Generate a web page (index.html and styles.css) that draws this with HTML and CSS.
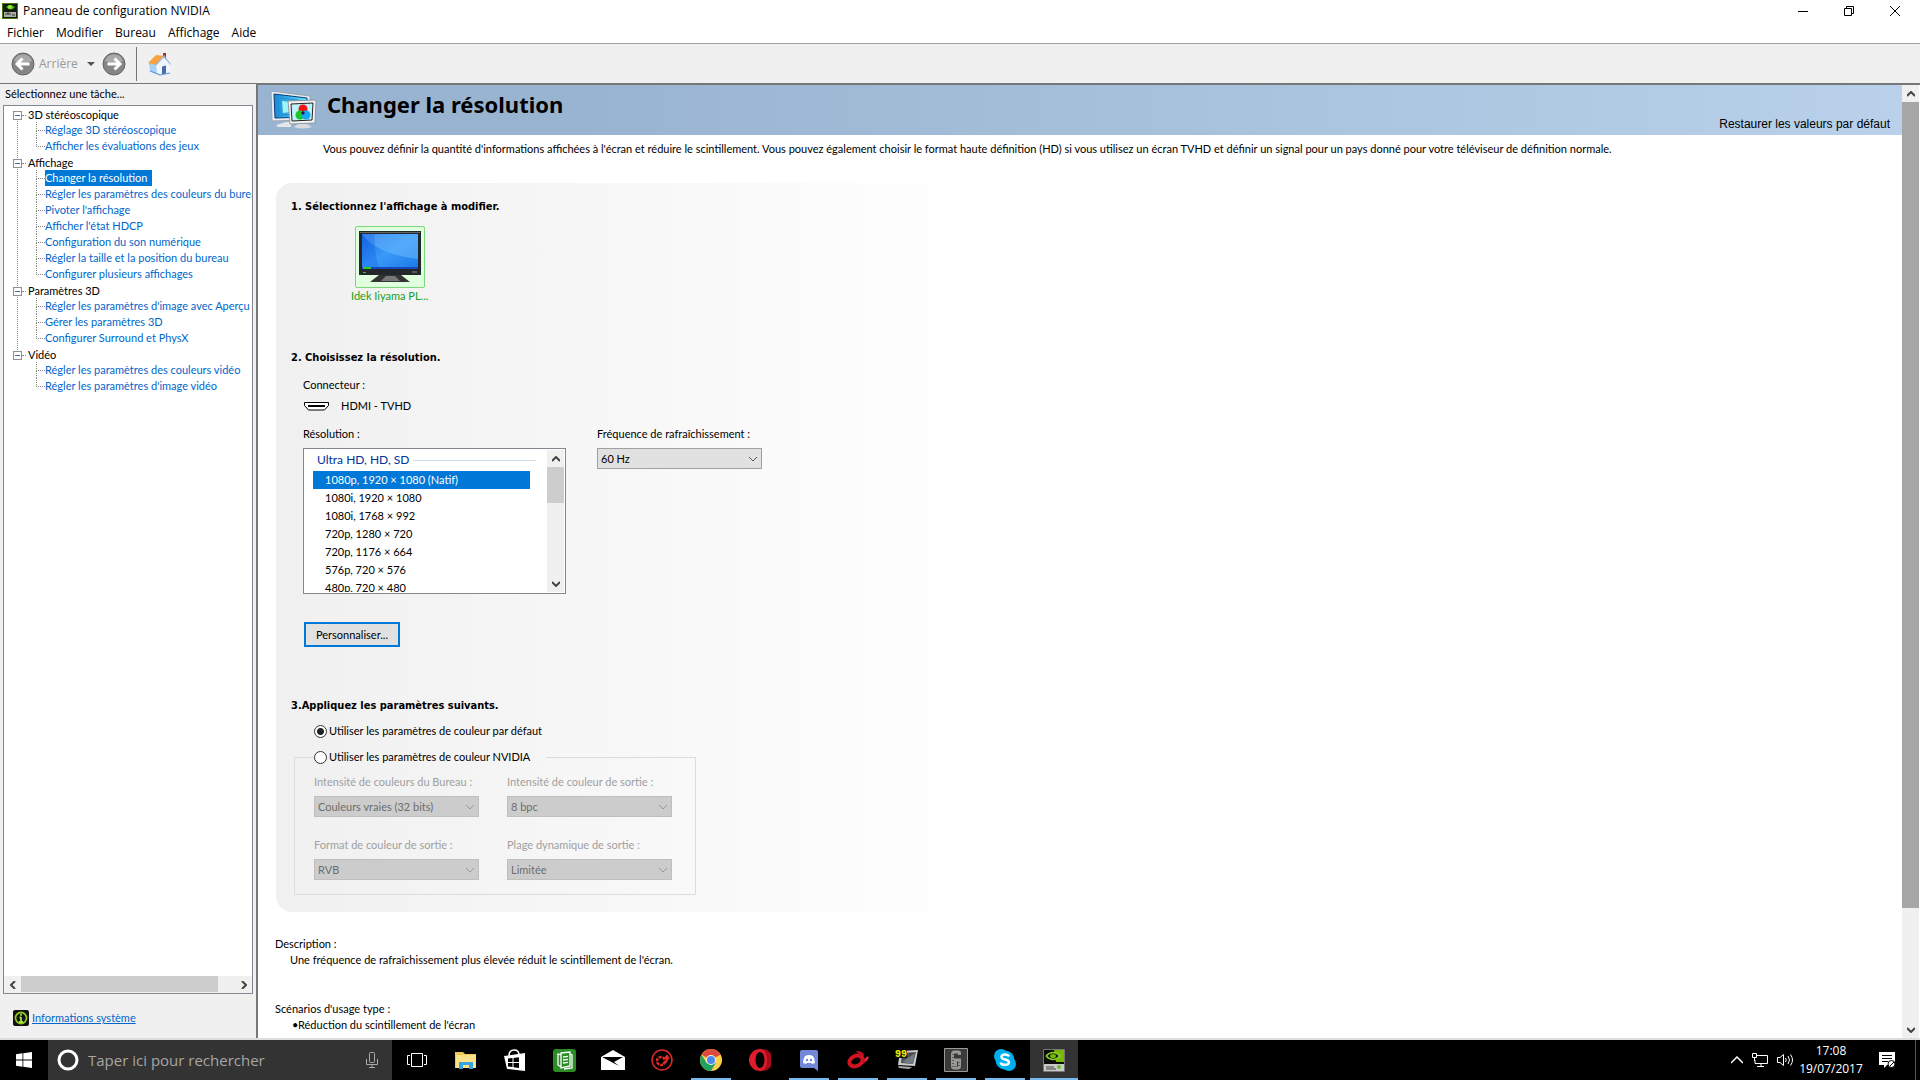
FILE: index.html
```html
<!DOCTYPE html>
<html lang="fr">
	<head>
		<meta charset="UTF-8">
		<title>Panneau de configuration NVIDIA</title>
		<link rel="stylesheet" href="styles.css">
	</head>
	<body>
		<!-- barre de titre -->
		<header class="titlebar">
			<svg class="app-icon" width="16" height="16" viewBox="0 0 16 16"><rect width="16" height="16" fill="#4c7a10"/><rect x="1" y="1" width="14" height="14" fill="#141a0e"/><path d="M4 4q4-4 9 0q-4 5-9 0" fill="#4caf10"/><circle cx="8" cy="4" r="2" fill="#8ff03c"/><rect x="2" y="9" width="12" height="5" fill="#aab0a8"/><path d="M3 11h6M10 12h3M6 9v2" stroke="#333"/></svg>
			<h1 class="win-title">Panneau de configuration NVIDIA</h1>
			<button class="win-btn" aria-label="Réduire"><svg width="10" height="10"><path d="M0 5.5h10" stroke="#000"/></svg></button>
			<button class="win-btn" aria-label="Restaurer"><svg width="10" height="10" fill="none" stroke="#000"><path d="M.5 2.5h7v7h-7zM2.5 2.5v-2h7v7h-2"/></svg></button>
			<button class="win-btn" aria-label="Fermer"><svg width="10" height="10"><path d="M0 0l10 10M10 0L0 10" stroke="#000"/></svg></button>
		</header>
		<nav class="menubar">
			<button>Fichier</button>
			<button>Modifier</button>
			<button>Bureau</button>
			<button>Affichage</button>
			<button>Aide</button>
		</nav>

		<div class="toolbar">
			<button class="nav-btn">
				<svg width="24" height="24" viewBox="0 0 24 24"><circle cx="12" cy="12" r="11" fill="#858585" stroke="#666"/><path d="M3 9a9.500 9.500 0 0 1 18 0q-9 4-18 0" fill="#a9a9a9"/><path d="M18.500 12H6.500M11.500 6.500L6 12l5.500 5.500" fill="none" stroke="#fff" stroke-width="3"/></svg>
				<span>Arrière</span>
			</button>
			<button class="nav-drop" aria-label="Historique"><svg width="8" height="4"><path d="M0 0h8L4 4z" fill="#555"/></svg></button>
			<button class="nav-btn" aria-label="Suivant">
				<svg width="24" height="24" viewBox="0 0 24 24"><circle cx="12" cy="12" r="11" fill="#858585" stroke="#666"/><path d="M3 9a9.500 9.500 0 0 1 18 0q-9 4-18 0" fill="#a9a9a9"/><path d="M5.500 12H17.500M12.500 6.500L18 12l-5.500 5.500" fill="none" stroke="#fff" stroke-width="3"/></svg>
			</button>
			<button class="home-btn" aria-label="Accueil">
				<svg width="24" height="24" viewBox="0 0 24 24"><path d="M16 1h3v7h-3z" fill="#a03028"/><path d="M2 11l8-3 3 15-10-4z" fill="#a8d0f6"/><path d="M9 13l8-8 6 8v8l-10 2-3-2z" fill="#eef5fd"/><path d="M1 11L9 3l8 1-8 9z" fill="#f6a33c"/><path d="M9 13l8-9 6.500 8.500" fill="none" stroke="#9cb8dc" stroke-width="1.200"/><path d="M15 14.500l4-1v8l-4 .8z" fill="#4c68a8"/><path d="M3 19l10 4 10-2" fill="none" stroke="#5a96e0" stroke-width="1.200"/></svg>
			</button>
		</div>

		<div class="main">
			<aside class="sidebar">
				<h2 class="side-title">Sélectionnez une tâche...</h2>
				<div class="tree-box">
					<ul class="tree">
						<li class="group"><button class="toggle" aria-label="Replier"></button><span>3D stéréoscopique</span>
							<ul>
								<li><a href="#">Réglage 3D stéréoscopique</a></li>
								<li><a href="#">Afficher les évaluations des jeux</a></li>
							</ul>
						</li>
						<li class="group"><button class="toggle" aria-label="Replier"></button><span>Affichage</span>
							<ul>
								<li><a href="#" class="current">Changer la résolution</a></li>
								<li><a href="#">Régler les paramètres des couleurs du bureau</a></li>
								<li><a href="#">Pivoter l'affichage</a></li>
								<li><a href="#">Afficher l'état HDCP</a></li>
								<li><a href="#">Configuration du son numérique</a></li>
								<li><a href="#">Régler la taille et la position du bureau</a></li>
								<li><a href="#">Configurer plusieurs affichages</a></li>
							</ul>
						</li>
						<li class="group"><button class="toggle" aria-label="Replier"></button><span>Paramètres 3D</span>
							<ul>
								<li><a href="#">Régler les paramètres d'image avec Aperçu</a></li>
								<li><a href="#">Gérer les paramètres 3D</a></li>
								<li><a href="#">Configurer Surround et PhysX</a></li>
							</ul>
						</li>
						<li class="group"><button class="toggle" aria-label="Replier"></button><span>Vidéo</span>
							<ul>
								<li><a href="#">Régler les paramètres des couleurs vidéo</a></li>
								<li><a href="#">Régler les paramètres d'image vidéo</a></li>
							</ul>
						</li>
					</ul>
					<div class="hscroll">
						<button aria-label="Gauche"><svg width="6" height="8"><path d="M5 0L1 4l4 4" fill="none" stroke="#444" stroke-width="2"/></svg></button>
						<div class="track"><div class="thumb"></div></div>
						<button aria-label="Droite"><svg width="6" height="8"><path d="M1 0l4 4-4 4" fill="none" stroke="#444" stroke-width="2"/></svg></button>
					</div>
				</div>
				<div class="sysinfo">
					<svg width="16" height="16" viewBox="0 0 16 16"><rect width="16" height="16" rx="2" fill="#111"/><circle cx="8" cy="8" r="5.500" fill="none" stroke="#8ccb1c" stroke-width="1.800"/><path d="M8 4v1.800M8 7v5M6.500 7.500H8M6 12h4" stroke="#a8e040" stroke-width="1.800"/></svg>
					<a href="#">Informations système</a>
				</div>
			</aside>

			<main class="content">
				<div class="page">
					<div class="banner">
						<svg class="banner-icon" width="48" height="40" viewBox="0 0 48 40">
							<defs><linearGradient id="scr" x1="0" y1="0" x2="1" y2="0"><stop offset="0" stop-color="#1688d8"/><stop offset="1" stop-color="#5fe6f4"/></linearGradient></defs>
							<path d="M1 1l39 5v24L2 31z" fill="#e8ecf0" stroke="#9aa4ae"/><path d="M4 4l33 4v19L5 28z" fill="url(#scr)" stroke="#0a3c80"/><path d="M8 8l20 2v14L9 25z" fill="none" stroke="#2a8ad0"/><path d="M12 11l8 1v10l-7 1z" fill="#9df4fa"/>
							<path d="M6 35l10-3h5v5H8z" fill="#e4e6e8"/>
							<path d="M18 11l28-1-1 23-25 1z" fill="#f2f3f5" stroke="#9098a0"/><path d="M21 14l22-1-1 17-20 1z" fill="#bff2fa" stroke="#222"/>
							<path d="M28 34h9l5 3q-10 3-18 0z" fill="#d8dadd"/>
							<circle cx="33" cy="19" r="4.500" fill="#f01414"/><circle cx="30" cy="25" r="4.500" fill="#18c828"/><circle cx="36" cy="25" r="4.500" fill="#16a8f0"/><path d="M33 21l2 2-2 2-2-2z" fill="#301050"/>
						</svg>
						<h2 class="banner-title">Changer la résolution</h2>
						<a href="#" class="restore">Restaurer les valeurs par défaut</a>
					</div>
					<p class="intro">Vous pouvez définir la quantité d'informations affichées à l'écran et réduire le scintillement. Vous pouvez également choisir le format haute définition (HD) si vous utilisez un écran TVHD et définir un signal pour un pays donné pour votre téléviseur de définition normale.</p>

					<div class="panel">
						<h3>1. Sélectionnez l'affichage à modifier.</h3>
						<button class="display">
							<span class="display-pic">
								<svg width="62" height="52" viewBox="0 0 62 52">
									<defs>
										<linearGradient id="tv" x1="0" y1="0" x2="1" y2="1"><stop offset="0" stop-color="#1668e4"/><stop offset=".5" stop-color="#3a9af8"/><stop offset="1" stop-color="#1a78e8"/></linearGradient>
									</defs>
									<path d="M0 0h62v44H0z" fill="#23262a"/><path d="M1 1h60v1H1z" fill="#666"/>
									<path d="M3 3h56v35H3z" fill="url(#tv)"/><path d="M3 3q14 20 56 25V3z" fill="#6ab8fc" opacity=".55"/><path d="M16 3q-2 12 4 35H3V3z" fill="#0e58e0" opacity=".3"/>
									<path d="M3 36h56v2H3z" fill="#1848c0"/><path d="M4 36h8v2H4zM4 41h3v1H4z" fill="#2ec82e"/><path d="M53 41h5" stroke="#888"/>
									<path d="M20 44h22l9 7H11z" fill="#333"/><path d="M27 45h9l5 5H22z" fill="#777"/>
								</svg>
							</span>
							<span>Idek Iiyama PL...</span>
						</button>

						<h3 class="step-two">2. Choisissez la résolution.</h3>
						<div class="step-body">
							<p>Connecteur :</p>
							<p class="connector">
								<svg width="25" height="9"><path d="M.5 .5h24v3l-4 4.500h-16l-4-4.500z" fill="#fff" stroke="#000"/><path d="M4 4h17" stroke="#000" stroke-width="2"/></svg>
								HDMI - TVHD
							</p>
							<div class="modes">
								<div class="mode-field">
									<p id="res-label">Résolution :</p>
									<div class="listbox">
										<div class="list-view">
											<p class="list-head">Ultra HD, HD, SD</p>
											<ul role="listbox" aria-labelledby="res-label">
												<li role="option" aria-selected="true">1080p, 1920 × 1080 (Natif)</li>
												<li role="option">1080i, 1920 × 1080</li>
												<li role="option">1080i, 1768 × 992</li>
												<li role="option">720p, 1280 × 720</li>
												<li role="option">720p, 1176 × 664</li>
												<li role="option">576p, 720 × 576</li>
												<li role="option">480p, 720 × 480</li>
											</ul>
										</div>
										<div class="vscroll">
											<button aria-label="Haut"><svg width="8" height="6"><path d="M0 5l4-4 4 4" fill="none" stroke="#444" stroke-width="2"/></svg></button>
											<div class="track"><div class="thumb"></div></div>
											<button aria-label="Bas"><svg width="8" height="6"><path d="M0 1l4 4 4-4" fill="none" stroke="#444" stroke-width="2"/></svg></button>
										</div>
									</div>
								</div>
								<div class="mode-field">
									<label for="freq">Fréquence de rafraîchissement :</label>
									<div class="combo">
										<select id="freq"><option>60 Hz</option></select>
										<svg width="10" height="6"><path d="M1 1l4 4 4-4" fill="none" stroke="#555"/></svg>
									</div>
								</div>
							</div>
							<button class="custom-btn">Personnaliser...</button>
						</div>

						<h3 class="step-three">3.Appliquez les paramètres suivants.</h3>
						<label class="choice first-choice"><input type="radio" name="color" checked>Utiliser les paramètres de couleur par défaut</label>
						<fieldset class="colors">
							<legend><label class="choice"><input type="radio" name="color">Utiliser les paramètres de couleur NVIDIA</label></legend>
							<div class="color-grid">
								<div class="mode-field">
									<label for="depth">Intensité de couleurs du Bureau :</label>
									<div class="combo">
										<select id="depth" disabled><option>Couleurs vraies (32 bits)</option></select>
										<svg width="10" height="6"><path d="M1 1l4 4 4-4" fill="none" stroke="#999"/></svg>
									</div>
								</div>
								<div class="mode-field">
									<label for="out-depth">Intensité de couleur de sortie :</label>
									<div class="combo">
										<select id="out-depth" disabled><option>8 bpc</option></select>
										<svg width="10" height="6"><path d="M1 1l4 4 4-4" fill="none" stroke="#999"/></svg>
									</div>
								</div>
								<div class="mode-field">
									<label for="format">Format de couleur de sortie :</label>
									<div class="combo">
										<select id="format" disabled><option>RVB</option></select>
										<svg width="10" height="6"><path d="M1 1l4 4 4-4" fill="none" stroke="#999"/></svg>
									</div>
								</div>
								<div class="mode-field">
									<label for="range">Plage dynamique de sortie :</label>
									<div class="combo">
										<select id="range" disabled><option>Limitée</option></select>
										<svg width="10" height="6"><path d="M1 1l4 4 4-4" fill="none" stroke="#999"/></svg>
									</div>
								</div>
							</div>
						</fieldset>
					</div>

					<div class="notes">
						<p>Description :</p>
						<p class="note-text">Une fréquence de rafraîchissement plus élevée réduit le scintillement de l'écran.</p>
						<p class="usage">Scénarios d'usage type :</p>
						<ul>
							<li>Réduction du scintillement de l'écran</li>
						</ul>
					</div>
				</div>
				<div class="vscroll page-scroll">
					<button aria-label="Haut"><svg width="8" height="6"><path d="M0 5l4-4 4 4" fill="none" stroke="#444" stroke-width="2"/></svg></button>
					<div class="track"><div class="thumb"></div></div>
					<button aria-label="Bas"><svg width="8" height="6"><path d="M0 1l4 4 4-4" fill="none" stroke="#444" stroke-width="2"/></svg></button>
				</div>
			</main>
		</div>

		<!-- barre des tâches -->
		<footer class="taskbar">
			<button class="task" aria-label="Démarrer"><svg width="16" height="16" viewBox="0 0 16 16" fill="#fff"><path d="M0 2.200L6.500 1.300v6.300H0zM7.300 1.200L16 0v7.600H7.300zM0 8.400h6.500v6.300L0 13.800zM7.300 8.400H16V16l-8.700-1.200z"/></svg></button>
			<label class="search">
				<svg width="22" height="22"><circle cx="11" cy="11" r="9" fill="none" stroke="#fff" stroke-width="3"/></svg>
				<input type="text" placeholder="Taper ici pour rechercher" aria-label="Rechercher">
				<svg width="12" height="16" fill="none" stroke="#aaa"><rect x="3.500" y=".5" width="5" height="10" rx="1"/><path d="M.5 7v5.500h11V7M6 12.500v3M3 15.500h6"/></svg>
			</label>
			<div class="tasks">
				<button class="task" aria-label="Vue des tâches"><svg width="20" height="16" fill="none" stroke="#fff"><path d="M4.500 1.500h11v13h-11zM3 3.500H.5v9H3M17 3.500h2.500v9H17"/></svg></button>
				<button class="task" aria-label="Explorateur"><svg width="22" height="18"><path d="M0 1h8l2 2h11v14H0z" fill="#f0c75a"/><path d="M1 4h20v13H1z" fill="#fce38a"/><path d="M4 18v-7h14v7h-4v-4H8v4z" fill="#36a5e0"/></svg></button>
				<button class="task" aria-label="Store"><svg width="22" height="24"><path d="M5 8q0-6 5-6t5 5" fill="none" stroke="#fff" stroke-width="1.500"/><path d="M0 8l21-3v18l-18-2z" fill="#fff"/><path d="M4 10.500l4.500-.5v4H4zM9.500 10l5.500-.8V14H9.500zM4 15h4.500v4L4 18.500zM9.500 15H15v5l-5.500-.7z" fill="#000"/></svg></button>
				<button class="task" aria-label="Documents"><svg width="23" height="23"><rect width="23" height="23" rx="3" fill="#2c8c28"/><g fill="none" stroke="#fff" stroke-width="1.300"><path d="M8 4l9-1v14l-9 2zM8 6l-3-1v11l3 2M17 5l2 1v13l-8 1"/><path d="M10 8l5-.6M10 11l5-.6M10 14l5-.6"/></g></svg></button>
				<button class="task" aria-label="Courrier"><svg width="24" height="20"><path d="M0 7l12-7 12 7v13H0z" fill="#fff"/><path d="M1 7l21 0-9 5 5 4z" fill="#000"/></svg></button>
				<button class="task" aria-label="Gaming"><svg width="22" height="22" fill="none" stroke="#e02828"><circle cx="11" cy="11" r="10" stroke-width="1.500"/><circle cx="10" cy="12" r="4" stroke-width="2.500" stroke-dasharray="3 1"/><path d="M12 14q5 0 4-6M13.500 10L16 7l2 3" stroke-width="2"/></svg></button>
				<button class="task open" aria-label="Chrome"><svg width="22" height="22" viewBox="-11 -11 22 22"><circle r="11" fill="#fcd04a"/><path d="M0 0L-9.500-5.500A11 11 0 0 1 9.500-5.500z" fill="#dc4a3c"/><path d="M-9.500-5.500A11 11 0 0 0 0 11L5 2.500-4.500 3z" fill="#22a060"/><path d="M0-5.500h9.500" stroke="#dc4a3c"/><circle r="5" fill="#f4f4f4"/><circle r="4" fill="#4a8af0"/></svg></button>
				<button class="task" aria-label="Opera"><svg width="22" height="22"><ellipse cx="11" cy="11" rx="11" ry="11" fill="#e01b2c"/><path d="M13 0a11 11 0 0 1 0 22q5-3 5-11t-5-11" fill="#a80c1a"/><ellipse cx="11" cy="11" rx="4.500" ry="8" fill="#000"/></svg></button>
				<button class="task open" aria-label="Discord"><svg width="18" height="21"><path d="M2 0h14q2 0 2 2v19l-4-3H2q-2 0-2-2V2q0-2 2-2z" fill="#7289da"/><path d="M5 6q4-2 8 0 2 3 2 7l-3 1-1-1H7l-1 1-3-1q0-4 2-7" fill="#fff"/><circle cx="7" cy="10" r="1.200" fill="#7289da"/><circle cx="11" cy="10" r="1.200" fill="#7289da"/></svg></button>
				<button class="task open" aria-label="MSI"><svg width="24" height="20"><ellipse cx="10" cy="11" rx="7" ry="5" fill="none" stroke="#d01424" stroke-width="4" transform="rotate(-25 10 11)"/><path d="M10 1q8 0 8 5l-4 0z" fill="#c01020"/><path d="M17 9l5-3q-1 6-5 8z" fill="#c01020"/><path d="M19 11q2-1 3-4" stroke="#e03040" stroke-width="2"/></svg></button>
				<button class="task open" aria-label="Fraps"><svg width="24" height="22"><path d="M5 2l18-1-3 16-17-1z" fill="#ccc"/><path d="M7 4l14-1-3 12-12-1z" fill="#444b52"/><path d="M7 13L20 4l-2 11z" fill="#727a82"/><path d="M3 17l14 1-3 2-10-1z" fill="#aaa"/><path d="M0 1h12v8H0z" fill="#111"/><text x="0" y="8" class="fps">99</text></svg></button>
				<button class="task open" aria-label="Rainbow Six"><svg width="24" height="24"><path d="M.5 .5h23v23H.5z" fill="#3a3a38" stroke="#999"/><path d="M15.500 7V5q0-1-1-1h-4q-2 0-2 2v12q0 2 2 2h3q2 0 2-2v-6h-4v6" fill="none" stroke="#989894" stroke-width="3"/><path d="M9 6v13M15 14v5" stroke="#222" stroke-dasharray="1 2"/></svg></button>
				<button class="task open" aria-label="Skype"><svg width="22" height="22"><circle cx="7" cy="7" r="7" fill="#00aff0"/><circle cx="15" cy="15" r="7" fill="#00aff0"/><circle cx="11" cy="11" r="9.500" fill="#00aff0"/><path d="M15 7.500q-1-2-4-2t-3.600 2.300q0 2 3.600 2.700t4 2.800q0 2.500-4 2.500t-4.300-2.300" fill="none" stroke="#fff" stroke-width="2.400"/></svg></button>
				<button class="task active" aria-label="NVIDIA"><svg width="22" height="23"><path d="M.5 .5h21v22H.5z" fill="#0c0c0c" stroke="#777"/><path d="M11 1h10v12h-8z" fill="#76b900"/><path d="M3 7q7-7 14 0-7 7-14 0" fill="#0c0c0c" stroke="#8ed420" stroke-width="1.500"/><ellipse cx="10" cy="7" rx="3" ry="2" fill="#76b900"/><path d="M1 15h20v7H1z" fill="#c8ccc4"/><path d="M3 18h8M3 20h10" stroke="#444"/><circle cx="16" cy="18" r="2" fill="#6cbc30"/></svg></button>
			</div>
			<div class="tray">
				<button aria-label="Icônes cachées"><svg width="12" height="8"><path d="M0 7l6-6 6 6" fill="none" stroke="#fff" stroke-width="1.500"/></svg></button>
				<button aria-label="Réseau"><svg width="16" height="14" fill="none" stroke="#fff"><path d="M5 2.500h10.500v8H3V7M9 10.500v3M5 13.500h7M.5 .5h4v4h-4zM2.500 4v4"/></svg></button>
				<button aria-label="Volume"><svg width="17" height="14" fill="none" stroke="#fff"><path d="M.5 4.500H3l3.500-3v11L3 9.500H.5zM8.500 5q1.500 2 0 4M11 3q3 4 0 8M13.500 1.500q4 5.500 0 11"/></svg></button>
			</div>
			<div class="clock"><time>17:08</time><time>19/07/2017</time></div>
			<button class="notif" aria-label="Notifications"><svg width="17" height="17"><path d="M0 0h16v13H8l-3 3v-3H0z" fill="#fff"/><path d="M3 3.500h10M3 6.500h10M3 9.500h6" stroke="#000"/><circle cx="12.500" cy="12" r="3.500" fill="#fff" stroke="#000"/><path d="M11 14l4-4" stroke="#000"/></svg></button>
		</footer>
	</body>
</html>
```
FILE: styles.css
```css
*{ box-sizing: border-box; margin: 0; padding: 0;}
body{ display: flex; flex-direction: column; height: 100vh; overflow: hidden; background: #fff; color: #000; font: 11px/16px Lato, Tahoma, sans-serif;}
ul{ list-style: none;}
button{ border: none; background: none; font: inherit; color: inherit;}
svg{ display: block; flex: none;}

/* barre de titre et menus */
.titlebar{ display: flex; align-items: center; height: 22px; padding: 0 2px; font: 12px/20px "Open Sans", "Segoe UI", sans-serif;}
.win-title{ flex: 1; padding-left: 5px; font-size: 12px; font-weight: normal;}
.win-btn{ display: flex; align-items: center; justify-content: center; width: 46px; height: 20px;}
.menubar{ display: flex; gap: 12px; height: 22px; padding: 0 7px; border-bottom: 1px solid #a0a0a0; font: 12px/20px "Open Sans", "Segoe UI", sans-serif;}
.toolbar{ display: flex; align-items: center; height: 40px; padding: 0 11px; background: #f0f0f0; border-bottom: 1px solid #777;}
.nav-btn{ display: flex; align-items: center; gap: 4px; color: #999; font: 12px/20px "Open Sans", "Segoe UI", sans-serif;}
.nav-drop{ padding: 8px 7px 8px 9px;}
.home-btn{ display: flex; align-items: center; height: 34px; margin-left: 10px; padding-left: 10px; border-left: 1px solid #777;}

/* colonne de gauche */
.main{ display: flex; flex: 1; min-height: 0; border-bottom: 2px solid #ddd;}
.sidebar{ display: flex; flex-direction: column; width: 258px; padding: 1px 3px 0; background: #f0f0f0; border-right: 2px solid #777;}
.side-title{ padding: 0 0 2px 2px; font-size: 11px; font-weight: normal; line-height: 18px;}
.tree-box{ display: flex; flex-direction: column; flex: 1; min-height: 0; border: 1px solid #828790; background: #fff;}
.tree{ flex: 1; padding: 1px 0 0 8px; overflow: hidden;}
.group{ position: relative; padding-left: 16px; white-space: nowrap;}
.group:not(:last-child):before{ content: ''; position: absolute; left: 5px; top: 12px; bottom: -4px; border-left: 1px dotted #888;}
.group ul{ margin: -1px 0 1px;}
.toggle{ position: absolute; left: 1px; top: 4px; width: 9px; height: 9px; border: 1px solid #919191; background: linear-gradient(#4b63a7, #4b63a7) center / 5px 1px no-repeat #fff;}
.toggle:after{ content: ''; position: absolute; left: 8px; top: 3px; width: 4px; border-top: 1px dotted #888;}
.group li{ position: relative; padding-left: 17px;}
.group li:before{ content: ''; position: absolute; left: 8px; top: 0; width: 8px; height: 8px; border-left: 1px dotted #888; border-bottom: 1px dotted #888;}
.group li:not(:last-child):after{ content: ''; position: absolute; left: 8px; top: 8px; height: 8px; border-left: 1px dotted #888;}
.tree a{ display: inline-block; vertical-align: top; color: #0066cc; text-decoration: none;}
.tree a.current{ padding-right: 5px; background: #0078d7; color: #fff;}
.hscroll{ display: flex; height: 17px; padding-bottom: 1px; background: #f0f0f0;}
.hscroll button, .vscroll button{ display: flex; align-items: center; justify-content: center; width: 17px; height: 17px;}
.track{ flex: 1;}
.thumb{ background: #cdcdcd;}
.hscroll .thumb{ width: 92%; height: 100%;}
.sysinfo{ display: flex; align-items: center; gap: 3px; height: 44px; padding: 4px 0 0 10px;}
.sysinfo a{ color: #0066cc;}

/* page de droite */
.content{ display: flex; flex: 1; min-width: 0; padding-right: 1px; border-top: 1px solid #777;}
.page{ flex: 1; min-width: 0; overflow: hidden;}
.vscroll{ display: flex; flex-direction: column; width: 17px; background: #f0f0f0;}
.page-scroll .thumb{ height: calc(88% - 3px); background: #a6a6a6;}
.banner{ display: flex; align-items: center; height: 50px; padding: 0 12px 0 12px; background: linear-gradient(90deg, #99b4d1 20%, #b9d1ea);}
.banner-title{ flex: 1; align-self: flex-start; padding: 3px 0 0 9px; font: bold 22px/32px "Noto Sans", "Trebuchet MS", sans-serif;}
.restore{ align-self: flex-end; padding-bottom: 3px; color: #000; font: 12px/16px "Liberation Sans", Arial, sans-serif; text-decoration: none;}
.intro{ padding: 6px 20px 0 65px;}
.panel{ margin: 26px 0 0 18px; padding: 15px 15px 17px; border-radius: 16px; background: linear-gradient(90deg, #f0f0f0, #fff 700px);}
.panel h3{ font: bold 11px/18px "DejaVu Sans Condensed", Tahoma, sans-serif;}
.display{ display: flex; flex-direction: column; align-items: center; margin: 10px 0 0 60px; color: #14a01e;}
.display-pic{ padding: 4px 3px; border: 1px solid #7cd87c; border-radius: 2px; background: #dfffdf;}
.panel .step-two{ margin-top: 45px;}
.step-body{ padding: 10px 0 0 12px;}
.connector{ display: flex; align-items: center; gap: 12px; padding: 5px 0 12px 1px;}
.modes{ display: flex; gap: 31px;}
.mode-field{ display: flex; flex-direction: column; gap: 6px;}
.listbox{ display: flex; width: 263px; height: 146px; padding: 1px; border: 1px solid #828790; background: #fff;}
.list-view{ flex: 1; overflow: hidden; padding-right: 17px;}
.list-head{ display: flex; align-items: center; gap: 4px; padding: 0 0 1px 12px; line-height: 20px; font-size: 12px; color: #003399;}
.list-head:after{ content: ''; flex: 1; margin-right: -6px; border-top: 1px solid #cfdcec;}
.list-view li{ margin-left: 8px; padding-left: 12px; line-height: 18px;}
.list-view [aria-selected]{ background: #0078d7; color: #fff;}
.listbox .thumb{ height: 36px;}
.combo{ position: relative; display: flex; align-items: center;}
.combo select{ width: 165px; height: 21px; padding: 0 3px; appearance: none; border: 1px solid #a0a0a0; border-radius: 0; background: #e1e1e1; color: #000; font: inherit; opacity: 1;}
.combo svg{ position: absolute; right: 4px; pointer-events: none;}
.combo select:disabled{ border-color: #bfbfbf; background: #ccc; color: #6d6d6d;}
.custom-btn{ height: 25px; margin: 28px 0 0 1px; padding: 0 10px; border: 2px solid #0078d7; background: #e1e1e1;}
.panel .step-three{ margin-top: 50px;}
.choice{ display: flex; align-items: center; gap: 2px;}
.choice input{ width: 13px; height: 13px; appearance: none; border: 1px solid #333; border-radius: 50%; background: #fff;}
.choice input:checked{ background: radial-gradient(circle, #222 3px, #fff 4px);}
.first-choice{ margin: 8px 0 10px 23px;}
.colors{ width: 402px; margin-left: 3px; padding: 9px 18px 14px 19px; border: 1px solid #dcdcdc;}
.colors legend{ padding-right: 16px;}
.color-grid{ display: grid; grid-template-columns: 165px 165px; gap: 20px 28px; color: #a0a0a0;}
.notes{ padding: 24px 0 0 17px;}
.note-text{ padding-left: 15px;}
.usage{ padding-top: 33px;}
.notes li{ padding-left: 17px;}
.notes li:before{ content: '•'; display: inline-block; width: 6px;}

/* barre des tâches */
.taskbar{ display: flex; height: 40px; background: #000; color: #fff; font: 12px/18px "Open Sans", "Segoe UI", sans-serif;}
.task{ display: flex; align-items: center; justify-content: center; width: 48px; height: 40px;}
.search{ display: flex; align-items: center; width: 344px; padding: 0 14px 0 9px; background: #333;}
.search input{ flex: 1; min-width: 0; padding-left: 9px; border: none; background: none; color: #fff; font: 15px/20px "Open Sans", "Segoe UI", sans-serif;}
.search input::placeholder{ color: #a6a6a6; opacity: 1;}
.tasks{ display: flex; flex: 1; gap: 1px; padding-left: 1px;}
.tasks .open, .tasks .active{ background: linear-gradient(#76b9ed, #76b9ed) center bottom / 40px 2px no-repeat;}
.tasks .active{ background-color: #333; background-size: 48px 2px;}
.fps{ fill: #f4f400; font: bold 10px "Liberation Mono", monospace;}
.tray{ display: flex; align-items: center; gap: 9px; padding-right: 5px;}
.clock{ display: flex; flex-direction: column; align-items: center; justify-content: center; width: 64px;}
.notif{ display: flex; align-items: center; justify-content: center; width: 46px; margin: 0 4px 0 7px; padding-right: 11px; border-right: 1px solid #555;}
```
